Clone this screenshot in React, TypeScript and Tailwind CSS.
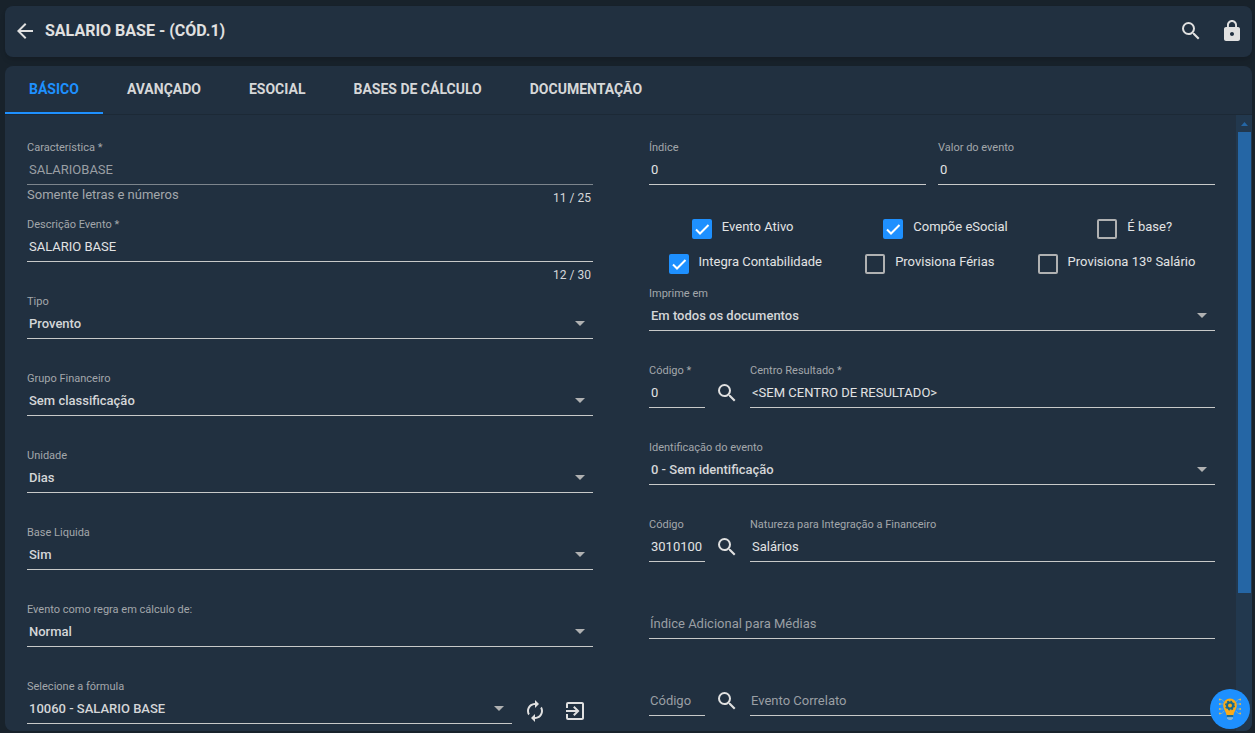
import { type ReactNode, useId, useState } from 'react';

import { clsx } from 'clsx';
import {
  MdArrowBack,
  MdAutorenew,
  MdExitToApp,
  MdLock,
  MdSearch,
} from 'react-icons/md';

const tabs = ['BÁSICO', 'AVANÇADO', 'ESOCIAL', 'BASES DE CÁLCULO', 'DOCUMENTAÇÃO'];

const labelClass = 'block h-4 text-[11px] leading-[18px] text-[#a3a7ab]';

const controlClass =
  'h-[30px] w-full appearance-none rounded-none border-b border-[#c8c9c9] bg-transparent text-[13px] outline-none placeholder:text-[#9a9fa4] focus:border-[#1e90ff] disabled:border-[#7d858d] disabled:text-[#9a9fa4]';

type FieldProps = {
  label: string;
  value?: string;
  hint?: string;
  counter?: string;
  disabled?: boolean;
  floating?: boolean;
  className?: string;
};

const TextField = ({
  label,
  value = '',
  hint,
  counter,
  disabled,
  floating = true,
  className,
}: FieldProps) => {
  const id = useId();

  return (
    <div className={clsx('h-[77px] min-w-0', className)}>
      {floating ? (
        <label className={labelClass} htmlFor={id}>
          {label}
        </label>
      ) : (
        <div className="h-4" />
      )}
      <input
        aria-label={floating ? undefined : label}
        className={clsx('block text-[#e2e3e4]', floating ? 'px-0.5' : 'px-px', controlClass)}
        defaultValue={value}
        disabled={disabled}
        id={id}
        placeholder={floating ? undefined : label}
        type="text"
      />
      {(hint || counter) && (
        <div className="flex justify-between leading-5">
          <span className="text-[13px] text-[#a3a7ab]">{hint}</span>
          <span className="pt-[3px] pr-0.5 text-xs leading-5 text-[#d5d7d9]">{counter}</span>
        </div>
      )}
    </div>
  );
};

const SelectField = ({ label, value, className }: FieldProps) => {
  const id = useId();

  return (
    <div className={clsx('h-[77px] min-w-0', className)}>
      <label className={labelClass} htmlFor={id}>
        {label}
      </label>
      <div className="relative">
        <select
          className={clsx('block px-0.5 font-medium text-[#d4d6d8]', controlClass)}
          id={id}
        >
          <option>{value}</option>
        </select>
        <svg
          className="pointer-events-none absolute top-3 right-2 h-[5px] w-[10px] text-[#b0b1b2]"
          fill="currentColor"
          viewBox="0 0 10 5"
        >
          <path d="M0 0h10L5 5z" />
        </svg>
      </div>
    </div>
  );
};

const Checkbox = ({ label, checked }: { label: string; checked?: boolean }) => (
  <label className="flex items-center gap-[10px] text-[13px] text-[#e2e3e4]">
    <span className="relative size-5">
      <input
        className="peer block size-5 appearance-none rounded-[2px] border-2 border-[#b0b1b2] checked:border-[#1e90ff] checked:bg-[#1e90ff]"
        defaultChecked={checked}
        type="checkbox"
      />
      <svg
        className="pointer-events-none absolute inset-0 hidden size-5 peer-checked:block"
        fill="none"
        stroke="#fff"
        strokeWidth="2"
        viewBox="0 0 20 20"
      >
        <path d="M4 10.5l4 4L16.5 6" />
      </svg>
    </span>
    <span className="pb-[3px]">{label}</span>
  </label>
);

const IconButton = ({
  label,
  className,
  children,
}: {
  label: string;
  className?: string;
  children: ReactNode;
}) => (
  <button
    aria-label={label}
    className={clsx('flex shrink-0 items-center justify-center text-[#e0e0e0]', className)}
    type="button"
  >
    {children}
  </button>
);

const LookupField = ({
  code,
  description,
}: {
  code: FieldProps;
  description: FieldProps;
}) => (
  <div className="flex">
    <TextField {...code} className="w-14 shrink-0" />
    <IconButton className="mt-[19px] mr-px h-6 w-11" label="Pesquisar">
      <MdSearch className="size-6" />
    </IconButton>
    <TextField {...description} className="flex-1" />
  </div>
);

const Scrollbar = () => (
  <div aria-hidden className="flex w-4 shrink-0 flex-col bg-[#22384e] pr-px pl-0.5">
    <div className="flex h-[17px] shrink-0 items-center justify-center">
      <svg className="h-1 w-[7px]" fill="#2566a5" viewBox="0 0 7 4">
        <path d="M3.5 0L7 4H0z" />
      </svg>
    </div>
    <div className="flex-[10] bg-[#2566a5]" />
    <div className="flex-[3]" />
  </div>
);

const HelpBulb = () => (
  <svg className="size-6" fill="none" viewBox="0 0 24 24">
    <g stroke="#7fb3b8" strokeWidth="0.8">
      <path d="M2 2.500h2l2 2.500M2 7h3M2 12h3M2 16.500h2l2-2.500M22 2.500h-2L18 5M22 7h-3M22 12h-3M22 16.500h-2L18 14" />
    </g>
    <g fill="#e5b750">
      <circle cx="1.800" cy="2.500" r="0.900" />
      <circle cx="1.800" cy="7" r="0.900" />
      <circle cx="1.800" cy="12" r="0.900" />
      <circle cx="1.800" cy="16.500" r="0.900" />
      <circle cx="22.200" cy="2.500" r="0.900" />
      <circle cx="22.200" cy="7" r="0.900" />
      <circle cx="22.200" cy="12" r="0.900" />
      <circle cx="22.200" cy="16.500" r="0.900" />
    </g>
    <path
      d="M12 1.500A6.800 6.800 0 0 0 5.200 8.300c0 4 2.800 6 3.300 10h7c.5-4 3.300-6 3.300-10A6.800 6.800 0 0 0 12 1.500z"
      fill="#fbab18"
    />
    <circle cx="12" cy="8.500" r="3" stroke="#17698f" strokeWidth="2" />
    <circle cx="12" cy="8.500" r="4.300" stroke="#17698f" strokeDasharray="1.700 1.677" strokeWidth="1.400" />
    <path d="M8.800 18h6.400v1.800H8.800z" fill="#17698f" />
    <path d="M9 20.300h6v1L13.300 23h-2.600L9 21.300z" fill="#86b3cf" />
  </svg>
);

export default function App() {
  const [activeTab, setActiveTab] = useState(tabs[0]);

  return (
    <div className="relative flex h-screen flex-col gap-[9px] bg-[#18222b] pt-[6px] pr-[3px] pb-0.5 pl-[5px] font-['Roboto',sans-serif]">
      <header className="flex h-[51px] shrink-0 items-center rounded-lg bg-[#213040] px-2 pb-0.5 shadow-md">
        <IconButton label="Voltar">
          <MdArrowBack className="size-6" />
        </IconButton>
        <h1 className="ml-2 flex-1 text-base font-bold text-[#e0e0e0]">
          SALARIO BASE - (CÓD.1)
        </h1>
        <IconButton label="Pesquisar">
          <MdSearch className="size-6" />
        </IconButton>
        <IconButton className="ml-[17px]" label="Bloquear">
          <MdLock className="size-6" />
        </IconButton>
      </header>

      <main className="flex min-h-0 flex-1 flex-col overflow-hidden rounded-lg bg-[#213040]">
        <nav className="flex h-[49px] shrink-0 border-b border-[#1c2936]" role="tablist">
          {tabs.map((tab) => (
            <button
              aria-selected={tab === activeTab}
              className={clsx(
                'h-12 border-b-2 px-6 text-sm font-bold',
                tab === activeTab
                  ? 'border-[#1e90ff] text-[#1e90ff]'
                  : 'border-transparent text-[#d6d7d8]',
              )}
              key={tab}
              onClick={() => setActiveTab(tab)}
              role="tab"
              type="button"
            >
              {tab}
            </button>
          ))}
        </nav>

        <div className="flex min-h-0 flex-1">
          <form className="grid flex-1 grid-cols-2 content-start gap-x-14 overflow-y-auto pt-6 pr-[21px] pl-[22px] [scrollbar-width:none]">
            <div>
              <TextField
                counter="11 / 25"
                disabled
                hint="Somente letras e números"
                label="Característica *"
                value="SALARIOBASE"
              />
              <TextField counter="12 / 30" label="Descrição Evento *" value="SALARIO BASE" />
              <SelectField label="Tipo" value="Provento" />
              <SelectField label="Grupo Financeiro" value="Sem classificação" />
              <SelectField label="Unidade" value="Dias" />
              <SelectField label="Base Liquida" value="Sim" />
              <SelectField label="Evento como regra em cálculo de:" value="Normal" />
              <div className="flex">
                <SelectField
                  className="flex-1"
                  label="Selecione a fórmula"
                  value="10060 - SALARIO BASE"
                />
                <div className="mt-[21px] ml-[5px] flex h-6 gap-1">
                  <IconButton className="w-9" label="Recarregar fórmula">
                    <MdAutorenew className="size-6" />
                  </IconButton>
                  <IconButton className="w-9" label="Abrir fórmula">
                    <MdExitToApp className="size-6" />
                  </IconButton>
                </div>
              </div>
            </div>

            <div>
              <div className="flex gap-3">
                <TextField className="flex-1" label="Índice" value="0" />
                <TextField className="flex-1" label="Valor do evento" value="0" />
              </div>
              <div className="-mx-0.5 -mt-[5px] mb-1">
                <div className="flex h-[35px] items-center justify-around">
                  <Checkbox checked label="Evento Ativo" />
                  <Checkbox checked label="Compõe eSocial" />
                  <Checkbox label="É base?" />
                </div>
                <div className="flex h-[35px] items-center justify-around">
                  <Checkbox checked label="Integra Contabilidade" />
                  <Checkbox label="Provisiona Férias" />
                  <Checkbox label="Provisiona 13º Salário" />
                </div>
              </div>
              <SelectField label="Imprime em" value="Em todos os documentos" />
              <LookupField
                code={{ label: 'Código *', value: '0' }}
                description={{ label: 'Centro Resultado *', value: '<SEM CENTRO DE RESULTADO>' }}
              />
              <SelectField label="Identificação do evento" value="0 - Sem identificação" />
              <LookupField
                code={{ label: 'Código', value: '3010100' }}
                description={{ label: 'Natureza para Integração a Financeiro', value: 'Salários' }}
              />
              <TextField floating={false} label="Índice Adicional para Médias" />
              <LookupField
                code={{ label: 'Código', floating: false }}
                description={{ label: 'Evento Correlato', floating: false }}
              />
            </div>
          </form>
          <Scrollbar />
        </div>
      </main>

      <button
        aria-label="Ajuda"
        className="absolute right-[5px] bottom-1 flex size-10 items-center justify-center rounded-full bg-[#1e90ff]"
        type="button"
      >
        <HelpBulb />
      </button>
    </div>
  );
}
